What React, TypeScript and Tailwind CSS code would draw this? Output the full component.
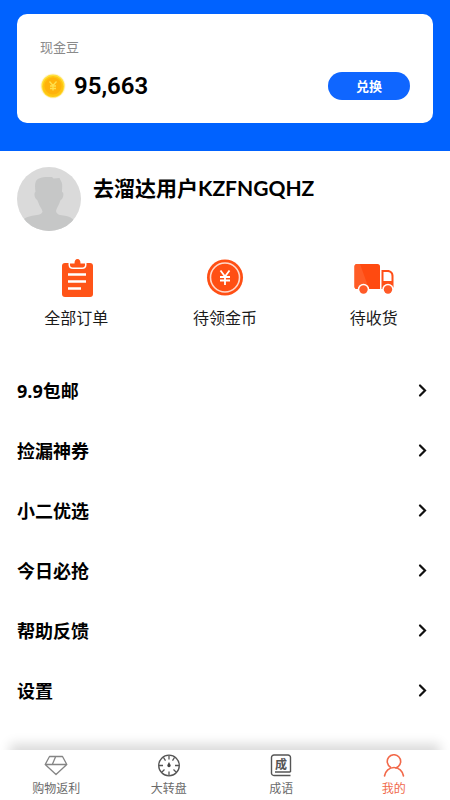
import type { ReactNode } from "react";

type Shortcut = { label: string; icon: ReactNode };
type Tab = { label: string; icon: ReactNode; active?: boolean };

const MENU_ITEMS = [
  "9.9包邮",
  "捡漏神券",
  "小二优选",
  "今日必抢",
  "帮助反馈",
  "设置",
];

const SHORTCUTS: Shortcut[] = [
  { label: "全部订单", icon: <ClipboardIcon /> },
  { label: "待领金币", icon: <YuanIcon /> },
  { label: "待收货", icon: <TruckIcon /> },
];

const TABS: Tab[] = [
  { label: "购物返利", icon: <DiamondIcon /> },
  { label: "大转盘", icon: <WheelIcon /> },
  { label: "成语", icon: <IdiomIcon /> },
  { label: "我的", icon: <PersonIcon />, active: true },
];

export default function App() {
  return (
    <div className="flex min-h-screen flex-col bg-white font-['Noto_Sans_CJK_SC',sans-serif] text-black">
      <header className="bg-[#0062ff] px-[17px] pt-[14px] pb-7">
        <section className="rounded-[10px] bg-white px-[23px] pt-6 pb-[19px]">
          <h2 className="text-[13px] leading-[18px] text-[#8a8a8a]">现金豆</h2>
          <div className="mt-3 flex h-9 items-center">
            <CoinIcon />
            <span className="ml-1.5 font-['Roboto',sans-serif] text-[24px] font-semibold">
              95,663
            </span>
            <button
              type="button"
              className="ml-auto h-7 w-[82px] rounded-full bg-[#0f66ff] text-[13px] leading-7 font-bold text-white"
            >
              兑换
            </button>
          </div>
        </section>
      </header>

      <main>
        <section className="flex gap-3 px-[17px] pt-4">
          <Avatar />
          <h1 className="pt-2 font-['Lato','Noto_Sans_CJK_SC',sans-serif] text-[21px] leading-[26px] font-bold">
            去溜达用户KZFNGQHZ
          </h1>
        </section>

        <section className="grid grid-cols-3 px-0.5 pt-7">
          {SHORTCUTS.map((s) => (
            <button
              key={s.label}
              type="button"
              className="flex flex-col items-center gap-1.5 text-[16px] leading-6 text-[#1a1a1a]"
            >
              {s.icon}
              {s.label}
            </button>
          ))}
        </section>

        <ul className="mt-8">
          {MENU_ITEMS.map((item) => (
            <li key={item}>
              <a
                href="#"
                className="flex h-[60px] items-center justify-between px-[17px] font-['Open_Sans','Noto_Sans_CJK_SC',sans-serif] text-[18px] font-bold"
              >
                {item}
                <ChevronIcon />
              </a>
            </li>
          ))}
        </ul>
      </main>

      <nav className="mt-auto grid h-[50px] grid-cols-4 bg-white shadow-[0_-16px_12px_-10px_rgba(0,0,0,0.15)]">
        {TABS.map((t) => (
          <a
            key={t.label}
            href="#"
            className={`flex flex-col items-center pt-1 text-[12px] leading-5 ${
              t.active ? "text-[#f0694a]" : "text-[#6b6b6b]"
            }`}
          >
            {t.icon}
            {t.label}
          </a>
        ))}
      </nav>
    </div>
  );
}

function CoinIcon() {
  return (
    <svg className="size-7" viewBox="0 0 28 28" fill="none">
      <circle cx="13" cy="14" r="12.5" fill="#fff3d6" />
      <circle cx="13" cy="14" r="11.5" fill="#ffe03a" />
      <circle cx="13" cy="14.5" r="10.5" fill="#ffc411" />
      <circle cx="13" cy="14" r="8.6" fill="#ffb20a" />
      <path
        d="M9.5 9.5l3.5 4 3.5-4M10 14h6M10 16.500h6M13 13.500v5"
        stroke="#ffe04d"
        strokeWidth="1.300"
      />
    </svg>
  );
}

function Avatar() {
  return (
    <svg className="size-16 shrink-0 rounded-full" viewBox="0 0 64 64">
      <rect width="64" height="64" fill="#dadada" />
      <path
        d="M18.500 25c-.5-4-1-8 .5-11 2-3 6-4 11-4h5l1.500 1.500 6-.5 1.500 3c2 3 1 7 1 11 2 0 2 5-.5 7.500-1 0-1.500 2-2 3.500-1 3-3 5-3.500 8 .5 3 3 4 7 4.500 6 .5 10 3 12 6V64H5V54c2-3 7-5 12-5.500 4-.5 8-1 8.500-4-.5-3-3-5-4-8.500-.5-1.500-1-3-2-3.500-2.500-2.500-2.500-7-1-7.500z"
        fill="#c6c7c7"
      />
    </svg>
  );
}

function ClipboardIcon() {
  return (
    <svg className="size-10" viewBox="0 0 40 40" fill="none">
      <rect x="6" y="4" width="31" height="34" rx="3" fill="#ff5418" />
      <path
        d="M12.500 2v3.500c0 3 1.500 4.500 4.500 4.500h9c3 0 4.500-1.500 4.500-4.500V2z"
        fill="#fff"
      />
      <path
        d="M14 4.500h4.500c0-3 1-4.500 3-4.500s3 1.500 3 4.500H29V6c0 1.500-1 2.500-2.500 2.500h-10C15 8.500 14 7.500 14 6z"
        fill="#ff5418"
      />
      <path d="M12 15.500h18M12 22.500h18M12 29.500h13" stroke="#fff" strokeWidth="2.400" />
    </svg>
  );
}

function YuanIcon() {
  return (
    <svg className="size-10" viewBox="0 0 40 40" fill="none">
      <circle cx="20" cy="18.500" r="18" fill="#ff4f14" />
      <circle cx="20" cy="18.500" r="14.500" stroke="#ffd9cc" strokeWidth="1.600" />
      <path
        d="M15.500 11.500l4.500 6 4.500-6M15 18h10M15 21.500h10M20 17.500v8.500"
        stroke="#fff"
        strokeWidth="1.800"
      />
    </svg>
  );
}

function TruckIcon() {
  return (
    <svg className="size-10" viewBox="0 0 40 40" fill="none">
      <path
        d="M3 5h20.500a2.500 2.500 0 0 1 2.500 2.500V30H3a2.500 2.500 0 0 1-2.500-2.500v-20A2.500 2.500 0 0 1 3 5z"
        fill="#ff4a10"
      />
      <path d="M3 5h3l9 25H3a2.500 2.500 0 0 1-2.500-2.500v-20A2.500 2.500 0 0 1 3 5z" fill="#ff5c26" />
      <path
        d="M27.500 11h6c3.500 0 6 2.500 6 6v10.500a2.500 2.500 0 0 1-2.500 2.500h-9.500z"
        fill="#ff4f18"
      />
      <path d="M29.500 13h4c2.500 0 4 1.500 4 4v5h-8z" fill="#fff" />
      <circle cx="9.500" cy="30.500" r="5.800" fill="#fff" />
      <circle cx="9.500" cy="30.500" r="4.200" fill="#ff5a28" />
      <circle cx="34" cy="30.500" r="5.800" fill="#fff" />
      <circle cx="34" cy="30.500" r="4.200" fill="#ff5a28" />
    </svg>
  );
}

function ChevronIcon() {
  return (
    <svg className="size-4" viewBox="0 0 16 16" fill="none">
      <path
        d="M3 2.500l5 5-5 5"
        stroke="#111"
        strokeWidth="2.200"
        strokeLinecap="round"
      />
    </svg>
  );
}

function DiamondIcon() {
  return (
    <svg
      className="size-6"
      viewBox="0 0 24 24"
      fill="none"
      stroke="#858585"
      strokeWidth="1.300"
      strokeLinejoin="round"
    >
      <path d="M5.500 2.500h13L22.800 10.500 12 20.500 1.200 10.500zM1.200 10.500h21.600M11.500 3L8.500 10" />
    </svg>
  );
}

function WheelIcon() {
  return (
    <svg className="size-6" viewBox="0 0 24 24" fill="none" stroke="#555" strokeWidth="1.300">
      <circle cx="12" cy="11.500" r="10.300" />
      <path d="M12 1.500v4M12 17.500v4M2 11.500h4M18 11.500h4M6.500 3.500l2 3.200M17.500 3.500l-2 3.200M4.500 18.500l3-3M19.500 18.500l-3-3" />
      <path d="M12 8l1.600 3a1.700 1.700 0 1 1-3.200 0z" fill="#444" stroke="none" />
    </svg>
  );
}

function IdiomIcon() {
  return (
    <svg className="size-6" viewBox="0 0 24 24" fill="none" stroke="#555" strokeWidth="1.400">
      <path d="M21.500 18V3.500A2.500 2.500 0 0 0 19 1H5a2.500 2.500 0 0 0-2.500 2.500v15A2.500 2.500 0 0 0 5 21.500h16.500M6 18h15.500" />
      <text
        x="12"
        y="14.500"
        textAnchor="middle"
        fontSize="12"
        fontWeight="700"
        fill="#555"
        stroke="none"
      >
        成
      </text>
    </svg>
  );
}

function PersonIcon() {
  return (
    <svg
      className="size-6"
      viewBox="0 0 24 24"
      fill="none"
      stroke="#f2694a"
      strokeWidth="1.600"
      strokeLinecap="round"
    >
      <path d="M8.500 13.200a6.700 6.700 0 1 1 7.500-.400L14 14" />
      <path d="M2.500 22c.8-5 4.700-8.500 9.500-8.500s8.700 3.500 9.500 8.500" />
    </svg>
  );
}
